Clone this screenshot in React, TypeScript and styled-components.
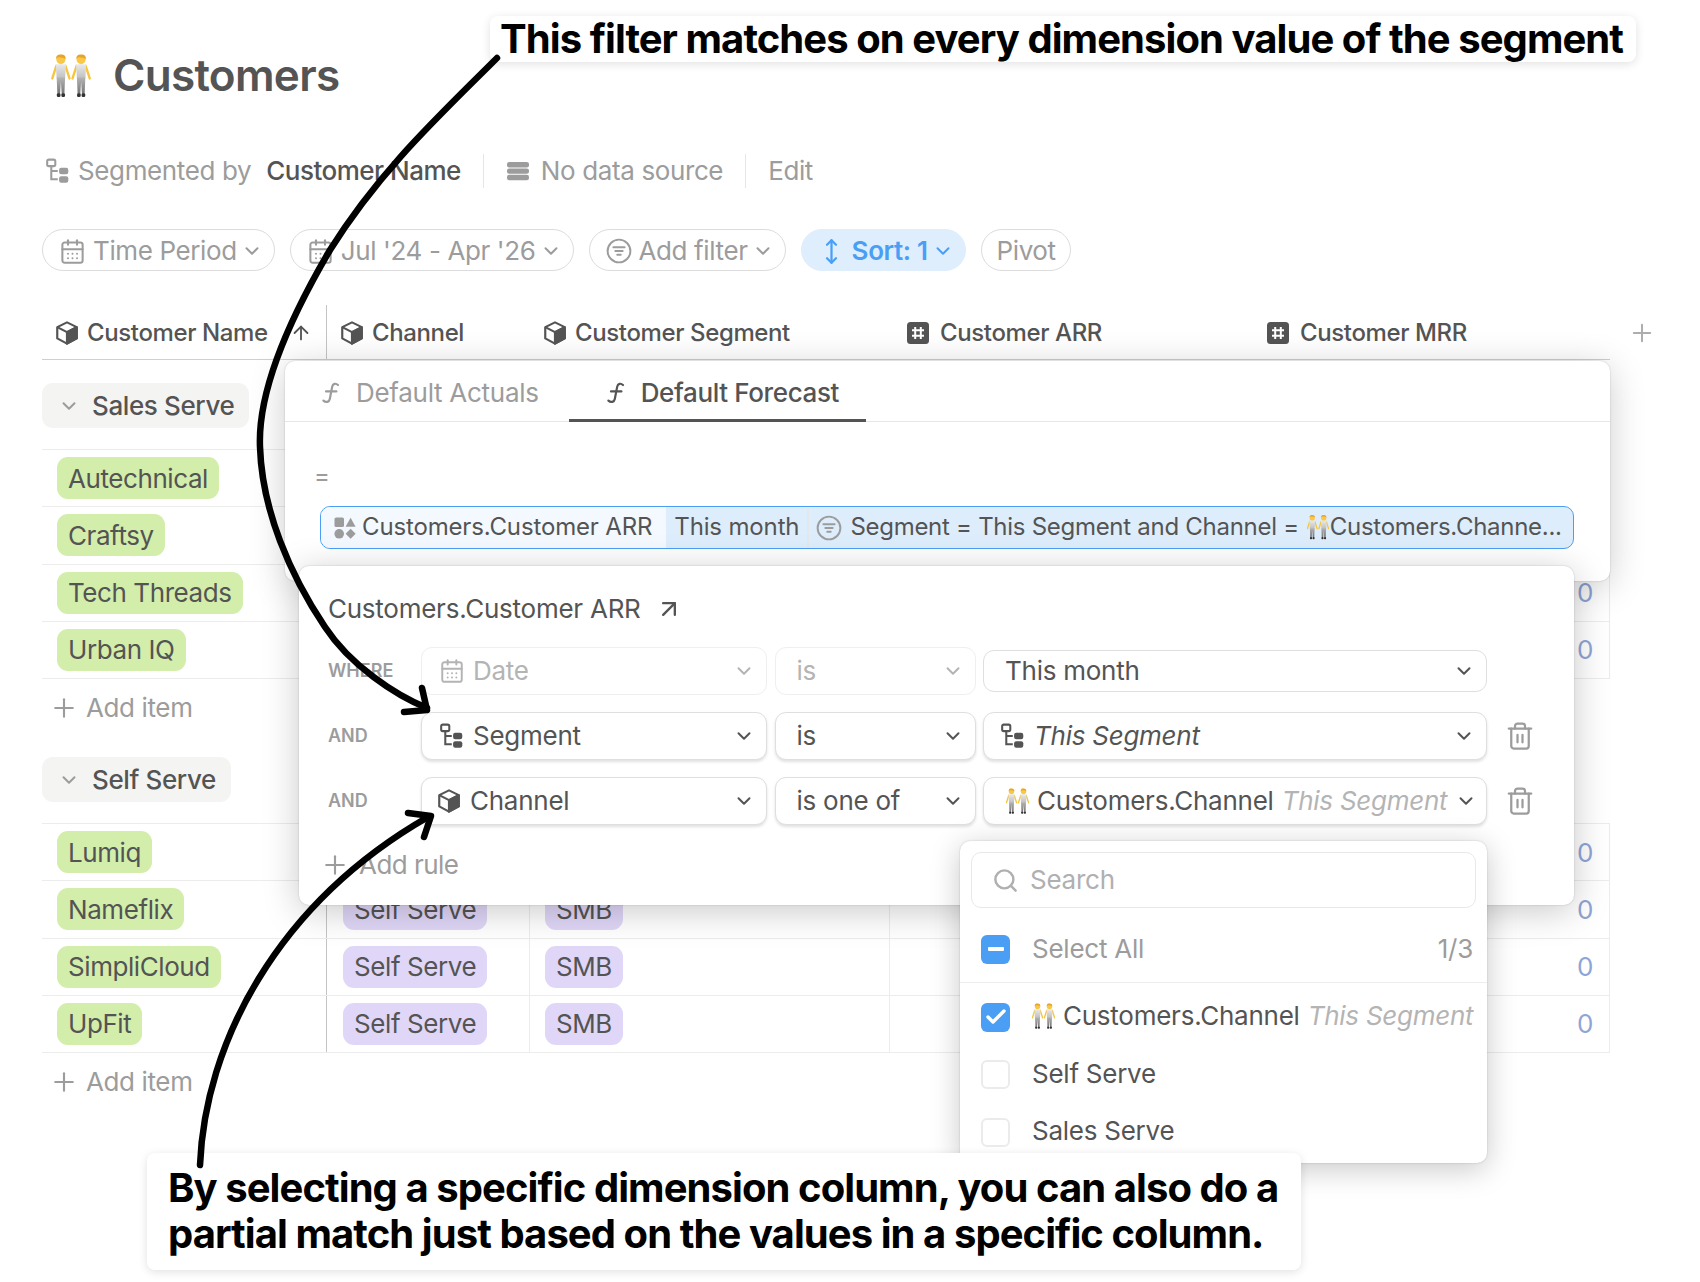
import React from "react";
import styled, { createGlobalStyle } from "styled-components";
import { ArrowUp, ArrowUpRight, CalendarDays, ChevronDown, MoveVertical, Plus, Search, Trash2, Check } from "lucide-react";

const Global = createGlobalStyle`
  html, body { margin: 0; padding: 0; background: #fff; }
  body { font-family: Inter, "Noto Sans", sans-serif; color: #545454; font-size: 26px; line-height: 1.2; letter-spacing: -0.38px; }
  * { box-sizing: border-box; }
`;

const TEXT = "#545454";
const MUTED = "#9c9c9c";
const BLUE = "#4a9ff5";

/* ---------- drawn icons ---------- */
const Svg = styled.svg<{ $size?: number }>`
  width: ${(p) => p.$size ?? 24}px;
  height: ${(p) => p.$size ?? 24}px;
  flex: none;
  display: block;
`;

const CubeIcon = ({ size = 26 }: { size?: number }) => (
  <Svg $size={size} viewBox="0 0 24 24" fill="none" stroke="currentColor" strokeWidth="2" strokeLinejoin="round">
    <path d="M12 2.2 21 6.6V17L12 21.8 3 17V6.6Z" />
    <path d="M3 6.6 12 11.2 21 6.6" />
    <path d="M12 11.2 21 6.6V17L12 21.8Z" fill="currentColor" />
  </Svg>
);
const HashIcon = () => (
  <Svg $size={22} viewBox="0 0 22 22">
    <rect width="22" height="22" rx="3.5" fill={TEXT} />
    <path d="M8.2 5v12M13.8 5v12M5 8.2h12M5 13.8h12" stroke="#fff" strokeWidth="2" fill="none" />
  </Svg>
);
const SegmentIcon = ({ size = 26 }: { size?: number }) => (
  <Svg $size={size} viewBox="0 0 24 24" fill="none" stroke="currentColor" strokeWidth="1.9">
    <rect x="2" y="1.5" width="7.5" height="6" rx="1.5" />
    <path d="M5.8 7.5v12.2h6M5.8 12h6" />
    <rect x="13" y="9" width="8.5" height="6" rx="2" fill="currentColor" stroke="none" />
    <rect x="13" y="16.8" width="8.5" height="6" rx="2" fill="currentColor" stroke="none" />
  </Svg>
);
const FilterCircleIcon = ({ size = 26 }: { size?: number }) => (
  <Svg $size={size} viewBox="0 0 24 24" fill="none" stroke="currentColor" strokeWidth="1.8" strokeLinecap="round">
    <circle cx="12" cy="12" r="10.5" />
    <path d="M6.8 8.6h10.4M8.6 12h6.8M10.4 15.4h3.2" />
  </Svg>
);
const ServerIcon = () => (
  <Svg $size={24} viewBox="0 0 24 24" fill="currentColor">
    <rect x="1" y="3" width="22" height="5.4" rx="2.2" />
    <rect x="1" y="9.4" width="22" height="5.4" rx="2.2" />
    <rect x="1" y="15.8" width="22" height="5.4" rx="2.2" />
  </Svg>
);
const FnIcon = () => (
  <Svg $size={22} viewBox="0 0 22 22" fill="none" stroke="currentColor" strokeWidth="2.2" strokeLinecap="round">
    <path d="M18 3C15.6 .8 12.8 1.6 12.2 4.6L9.8 17C9.2 20 6 21 3.4 18.6" />
    <path d="M6 9.4H16.4" />
  </Svg>
);
const ShapesIcon = () => (
  <Svg $size={22} viewBox="0 0 22 22" fill="currentColor">
    <rect x="0.5" y="0.5" width="9.5" height="9.5" rx="1.6" />
    <path d="M16.6 .8 21.6 9.8H11.6Z" />
    <circle cx="5.2" cy="16.8" r="4.8" />
    <path d="M16.6 11.8 21.6 16.8 16.6 21.8 11.6 16.8Z" />
  </Svg>
);

const EmojiSvg = styled.svg<{ $w: number; $h: number }>`
  width: ${(p) => p.$w}px;
  height: ${(p) => p.$h}px;
  flex: none;
  display: block;
`;
const Person = ({ x }: { x: number }) => (
  <g transform={`translate(${x} 0)`}>
    <path d="M6.6 14 1.8 29" stroke="#f7c63e" strokeWidth="2.8" strokeLinecap="round" fill="none" />
    <path d="M17.4 14 22.2 29" stroke="#f7c63e" strokeWidth="2.8" strokeLinecap="round" fill="none" />
    <path d="M6 12.5Q12 11 18 12.5L17 29H7Z" fill="url(#shirt)" />
    <path d="M7 28H17L16.2 47H13L12 33 11 47H7.8Z" fill="url(#legs)" />
    <rect x="7.2" y="46.5" width="4.3" height="4.5" rx="1.6" fill="#333" />
    <rect x="12.6" y="46.5" width="4.3" height="4.5" rx="1.6" fill="#333" />
    <circle cx="12" cy="6.6" r="5.4" fill="#f9c846" />
    <path d="M6.4 6.2C6 1 9.5 .4 12 .6 15.4.4 18 2 17.6 6.2 16 4.2 12 4 9.4 3.8 8 4 7 5 6.4 6.2Z" fill="#e5a52a" />
  </g>
);
const PeopleEmoji = ({ w = 23, h = 26 }: { w?: number; h?: number }) => (
  <EmojiSvg $w={w} $h={h} viewBox="0 0 46 51">
    <defs>
      <linearGradient id="shirt" x1="0" y1="0" x2="0" y2="1">
        <stop offset="0" stopColor="#eaeaea" />
        <stop offset="1" stopColor="#bfbfbf" />
      </linearGradient>
      <linearGradient id="legs" x1="0" y1="0" x2="0" y2="1">
        <stop offset="0" stopColor="#b4b4b4" />
        <stop offset="1" stopColor="#767676" />
      </linearGradient>
    </defs>
    <Person x={-1} />
    <Person x={23} />
  </EmojiSvg>
);

/* ---------- page ---------- */
const Page = styled.div`
  position: relative;
  width: 1700px;
  height: 1282px;
  overflow: hidden;
  padding: 52px 0 0 42px;
`;
const TitleRow = styled.div`
  display: flex;
  align-items: center;
  height: 46px;
  margin-left: 9px;
  gap: 22px;
`;
const Title = styled.h1`
  margin: 0;
  font-size: 44px;
  font-weight: 600;
  letter-spacing: -0.7px;
  color: ${TEXT};
`;
const MetaRow = styled.div`
  display: flex;
  align-items: center;
  height: 34px;
  margin-top: 56px;
  color: ${MUTED};
`;
const MetaGroup = styled.div`
  display: flex;
  align-items: center;
  gap: 7px;
  padding: 0 22px;
  height: 34px;
  &:first-child { padding-left: 3px; }
  & + & { border-left: 1px solid #e6e6e6; }
`;
const MetaStrong = styled.span`
  color: ${TEXT};
  font-weight: 500;
  margin-left: 8px;
  letter-spacing: -0.5px;
`;
const MetaServer = styled.span`
  display: flex;
  margin-right: 4px;
`;
const FilterRow = styled.div`
  display: flex;
  gap: 15px;
  margin-top: 41px;
`;
const Pill = styled.button<{ $active?: boolean }>`
  display: flex;
  align-items: center;
  gap: 6px;
  height: 42px;
  padding: 2px 11px 0 16px;
  border-radius: 21px;
  font: inherit;
  letter-spacing: inherit;
  font-weight: ${(p) => (p.$active ? 600 : 400)};
  color: ${(p) => (p.$active ? BLUE : MUTED)};
  background: ${(p) => (p.$active ? "#deeefd" : "#fff")};
  border: 1px solid ${(p) => (p.$active ? "#deeefd" : "#dcdcdc")};
  svg:first-child { margin-right: 1px; }
  svg:last-child { margin-left: -2px; }
`;
const PivotPill = styled(Pill)`
  padding: 2px 14px 0 15px;
`;

/* ---------- table ---------- */
const COLS = "285px 203px 360px 360px 360px";
const HeaderWrap = styled.div`
  display: flex;
  align-items: center;
  margin-top: 34px;
  font-size: 24px;
`;
const HeaderGrid = styled.div`
  display: grid;
  grid-template-columns: ${COLS};
  width: 1568px;
  height: 55px;
  border-bottom: 1px solid #cfcfcf;
`;
const HeaderCell = styled.div<{ $first?: boolean; $pad?: number; $gap?: number }>`
  display: flex;
  align-items: center;
  gap: ${(p) => p.$gap ?? 7}px;
  padding: 2px 14px 0 ${(p) => p.$pad ?? 12}px;
  font-weight: 500;
  border-right: ${(p) => (p.$first ? "1px solid #c4c4c4" : "0")};
`;
const SortMark = styled.span`
  margin-left: auto;
  display: flex;
`;
const AddColumn = styled.span`
  margin-left: 18px;
  color: #adadad;
  display: flex;
`;
const GroupChip = styled.div`
  display: inline-flex;
  align-items: center;
  gap: 12px;
  height: 45px;
  margin: 23px 0 21px;
  padding: 0 15px 0 16px;
  background: #f4f4f3;
  border-radius: 11px;
  color: ${TEXT};
  font-weight: 500;
  svg { color: ${MUTED}; }
`;
const Row = styled.div`
  display: grid;
  grid-template-columns: ${COLS};
  width: 1568px;
  height: 57.25px;
  border-top: 1px solid #ececec;
`;
const Cell = styled.div<{ $first?: boolean; $edge?: boolean; $pad?: number }>`
  display: flex;
  align-items: center;
  justify-content: ${(p) => (p.$edge ? "flex-end" : "flex-start")};
  padding: 0 ${(p) => (p.$edge ? 16 : 0)}px 0 ${(p) => p.$pad ?? 15}px;
  border-right: 1px solid ${(p) => (p.$first ? "#c4c4c4" : "#ececec")};
`;
const Tag = styled.span<{ $kind: "green" | "purple" }>`
  display: inline-flex;
  align-items: center;
  height: 42px;
  padding: 0 11px;
  border-radius: 11px;
  letter-spacing: -0.42px;
  background: ${(p) => (p.$kind === "green" ? "#d3edab" : "#e0d7f8")};
  color: ${TEXT};
  white-space: nowrap;
`;
const Zero = styled.span`
  color: #8fa5d6;
`;
const AddItem = styled.div`
  display: flex;
  align-items: center;
  gap: 7px;
  height: 56px;
  width: 1568px;
  padding: 2px 0 0 7px;
  border-top: 1px solid #ececec;
  color: ${MUTED};
`;

/* ---------- overlays ---------- */
const FormulaPopover = styled.div`
  position: absolute;
  left: 285px;
  top: 361px;
  width: 1325px;
  height: 220px;
  background: #fff;
  border-radius: 10px;
  box-shadow: 0 6px 36px rgba(0, 0, 0, 0.2), 0 0 2px rgba(0, 0, 0, 0.2);
`;
const TabBar = styled.div`
  display: flex;
  gap: 30px;
  height: 61px;
  padding-left: 35px;
  border-bottom: 1px solid #e6e6e6;
`;
const Tab = styled.div<{ $active?: boolean }>`
  display: flex;
  align-items: center;
  gap: 14px;
  padding: ${(p) => (p.$active ? "6px 27px 0 36px" : "6px 0 0")};
  margin-bottom: -1px;
  letter-spacing: ${(p) => (p.$active ? "-0.38px" : "-0.28px")};
  font-weight: ${(p) => (p.$active ? 500 : 400)};
  color: ${(p) => (p.$active ? TEXT : MUTED)};
  border-bottom: 3px solid ${(p) => (p.$active ? TEXT : "transparent")};
`;
const Equals = styled.div`
  margin: 42px 0 0 29px;
  height: 24px;
  line-height: 24px;
  font-size: 24px;
  color: ${MUTED};
`;
const FormulaBar = styled.div`
  display: flex;
  margin: 18px 36px 0 35px;
  height: 43px;
  font-size: 24px;
  letter-spacing: -0.15px;
  border: 1px solid ${BLUE};
  border-radius: 10px;
  overflow: hidden;
  background: #deedfb;
`;
const FormulaPart = styled.div<{ $light?: boolean; $sep?: boolean; $pad?: string }>`
  display: flex;
  align-items: center;
  gap: 6px;
  padding: ${(p) => p.$pad ?? "0 8px"};
  background: ${(p) => (p.$light ? "#f3f9fe" : "transparent")};
  border-right: ${(p) => (p.$sep ? "2px solid #e4e8ec" : "0")};
  white-space: nowrap;
  svg { color: ${MUTED}; }
`;
const FilterText = styled.span`
  margin-left: 2px;
  display: inline-flex;
  align-items: center;
  letter-spacing: -0.28px;
`;
const FormulaEmoji = styled.span`
  display: flex;
  margin: 0 1px 0 8px;
`;
const RulesPopover = styled.div`
  position: absolute;
  left: 299px;
  top: 566px;
  width: 1275px;
  height: 339px;
  background: #fff;
  border-radius: 10px;
  padding: 27px 0 0 29px;
  letter-spacing: -0.25px;
  box-shadow: 0 6px 36px rgba(0, 0, 0, 0.22), 0 0 2px rgba(0, 0, 0, 0.2);
`;
const RuleTitle = styled.div`
  display: flex;
  align-items: center;
  gap: 14px;
  height: 32px;
  font-weight: 400;
`;
const Rules = styled.div`
  display: grid;
  grid-template-columns: 85.5px 346px 201px 504px 44px;
  grid-auto-rows: 48px;
  column-gap: 7.5px;
  row-gap: 17px;
  align-items: center;
  margin-top: 22px;
`;
const RuleLabel = styled.span`
  font-size: 18px;
  font-weight: 600;
  letter-spacing: 0;
  color: ${MUTED};
`;
const Select = styled.div<{ $kind?: "disabled" | "plain" | "raised"; $pad?: number }>`
  display: flex;
  align-items: center;
  gap: 8px;
  height: ${(p) => (p.$kind === "plain" ? 42 : 48)}px;
  padding: 0 11px 0 ${(p) => p.$pad ?? 21}px;
  border-radius: 11px;
  background: #fff;
  white-space: nowrap;
  color: ${(p) => (p.$kind === "disabled" ? "#b4b4b4" : TEXT)};
  border: 1px solid ${(p) => (p.$kind === "disabled" ? "#efefef" : "#dfdfdf")};
  box-shadow: ${(p) => (p.$kind === "raised" ? "0 2px 3px rgba(0,0,0,.12)" : "none")};
`;
const Chevron = styled.span`
  margin-left: auto;
  display: flex;
  flex: none;
`;
const Italic = styled.em<{ $muted?: boolean }>`
  font-style: italic;
  color: ${(p) => (p.$muted ? "#b4b4b4" : TEXT)};
`;
const TrashBtn = styled.span`
  display: flex;
  color: ${MUTED};
  margin-left: 10px;
  svg { flex: none; }
`;
const AddRule = styled.div`
  display: flex;
  align-items: center;
  gap: 9px;
  height: 32px;
  margin: 24px 0 0 -8px;
  letter-spacing: -0.55px;
  color: ${MUTED};
`;
const Dropdown = styled.div`
  position: absolute;
  left: 960px;
  top: 841px;
  width: 527px;
  height: 322px;
  background: #fff;
  border-radius: 10px;
  padding: 11px 11px 0;
  overflow: hidden;
  letter-spacing: -0.25px;
  box-shadow: 0 6px 30px rgba(0, 0, 0, 0.22), 0 0 2px rgba(0, 0, 0, 0.2);
`;
const SearchBox = styled.div`
  display: flex;
  align-items: center;
  gap: 11px;
  height: 56px;
  padding-left: 20px;
  border: 1px solid #e8e8e8;
  border-radius: 10px;
  color: #b0b0b0;
`;
const DropRow = styled.div<{ $line?: boolean }>`
  display: flex;
  align-items: center;
  height: 57.5px;
  margin: 0 -11px;
  padding: 0 14px 0 21px;
  white-space: nowrap;
  border-bottom: ${(p) => (p.$line ? "1px solid #ededed" : "0")};
`;
const SelectAllRow = styled(DropRow)`
  height: 75px;
  padding-top: 8px;
  color: ${MUTED};
  margin-bottom: 4px;
`;
const Count = styled.span`
  margin-left: auto;
`;
const Checkbox = styled.span<{ $state?: "on" | "mixed" }>`
  display: flex;
  align-items: center;
  justify-content: center;
  width: 29px;
  height: 29px;
  flex: none;
  margin: ${(p) => (p.$state === "mixed" ? "0" : "3px")} 22px 0 0;
  border-radius: 6px;
  color: #fff;
  background: ${(p) => (p.$state ? BLUE : "#fff")};
  border: ${(p) => (p.$state ? "0" : "2px solid #ebebeb")};
`;
const MixedBar = styled.span`
  width: 16px;
  height: 4px;
  border-radius: 1px;
  background: #fff;
`;
const EmojiText = styled.span<{ $after?: number }>`
  display: inline-flex;
  align-items: center;
  gap: 8px;
  margin-right: ${(p) => p.$after ?? 0}px;
`;
const Callout = styled.div<{ $left: number; $top: number; $w: number; $h: number; $pad: number }>`
  position: absolute;
  left: ${(p) => p.$left}px;
  top: ${(p) => p.$top}px;
  width: ${(p) => p.$w}px;
  height: ${(p) => p.$h}px;
  padding: 0 0 1px ${(p) => p.$pad}px;
  background: #fff;
  border-radius: 8px;
  color: #000;
  font-size: 40px;
  font-weight: 700;
  line-height: 46px;
  letter-spacing: -0.93px;
  white-space: nowrap;
  display: flex;
  align-items: center;
  box-shadow: 0 2px 10px rgba(0, 0, 0, 0.12);
`;
const ArrowLayer = styled.svg`
  position: absolute;
  left: 0;
  top: 0;
  width: 1700px;
  height: 1282px;
  pointer-events: none;
`;

const Down = ({ size = 22 }: { size?: number }) => <ChevronDown size={size} strokeWidth={2.2} />;

const groups = [
  { name: "Sales Serve", kind: "Sales Serve", seg: "Mid-Market", items: ["Autechnical", "Craftsy", "Tech Threads", "Urban IQ"] },
  { name: "Self Serve", kind: "Self Serve", seg: "SMB", items: ["Lumiq", "Nameflix", "SimpliCloud", "UpFit"] },
];

export default function App() {
  return (
    <>
      <Global />
      <Page>
        <TitleRow>
          <PeopleEmoji w={40} h={43} />
          <Title>Customers</Title>
        </TitleRow>
        <MetaRow>
          <MetaGroup>
            <SegmentIcon />
            <span>Segmented by</span>
            <MetaStrong>Customer Name</MetaStrong>
          </MetaGroup>
          <MetaGroup>
            <MetaServer><ServerIcon /></MetaServer>
            <span>No data source</span>
          </MetaGroup>
          <MetaGroup>
            <span>Edit</span>
          </MetaGroup>
        </MetaRow>
        <FilterRow>
          <Pill><CalendarDays size={27} strokeWidth={1.8} />Time Period<Down /></Pill>
          <Pill><CalendarDays size={27} strokeWidth={1.8} />Jul '24 - Apr '26<Down /></Pill>
          <Pill><FilterCircleIcon />Add filter<Down /></Pill>
          <Pill $active><MoveVertical size={27} strokeWidth={2} />Sort: 1<Down /></Pill>
          <PivotPill>Pivot</PivotPill>
        </FilterRow>
        <HeaderWrap>
          <HeaderGrid>
            <HeaderCell $first><CubeIcon />Customer Name<SortMark><ArrowUp size={22} strokeWidth={2} /></SortMark></HeaderCell>
            <HeaderCell><CubeIcon />Channel</HeaderCell>
            <HeaderCell><CubeIcon />Customer Segment</HeaderCell>
            <HeaderCell $pad={17} $gap={11}><HashIcon />Customer ARR</HeaderCell>
            <HeaderCell $pad={17} $gap={11}><HashIcon />Customer MRR</HeaderCell>
          </HeaderGrid>
          <AddColumn><Plus size={28} strokeWidth={1.7} /></AddColumn>
        </HeaderWrap>

        {groups.map((g) => (
          <div key={g.name}>
            <GroupChip><Down />{g.name}</GroupChip>
            {g.items.map((item) => (
              <Row key={item}>
                <Cell $first><Tag $kind="green">{item}</Tag></Cell>
                <Cell $pad={16}><Tag $kind="purple">{g.kind}</Tag></Cell>
                <Cell $pad={15}><Tag $kind="purple">{g.seg}</Tag></Cell>
                <Cell $edge><Zero>0</Zero></Cell>
                <Cell $edge><Zero>0</Zero></Cell>
              </Row>
            ))}
            <AddItem><Plus size={30} strokeWidth={1.7} />Add item</AddItem>
          </div>
        ))}

        <FormulaPopover>
          <TabBar>
            <Tab><FnIcon />Default Actuals</Tab>
            <Tab $active><FnIcon />Default Forecast</Tab>
          </TabBar>
          <Equals>=</Equals>
          <FormulaBar>
            <FormulaPart $light $pad="0 14px 0 13px"><ShapesIcon />Customers.Customer ARR</FormulaPart>
            <FormulaPart $sep>This month</FormulaPart>
            <FormulaPart $pad="0 8px 0 7px">
              <FilterCircleIcon size={26} />
              <FilterText>Segment = This Segment and Channel =<FormulaEmoji><PeopleEmoji w={22} /></FormulaEmoji>Customers.Channe...</FilterText>
            </FormulaPart>
          </FormulaBar>
        </FormulaPopover>

        <RulesPopover>
          <RuleTitle>Customers.Customer ARR<ArrowUpRight size={28} strokeWidth={2} /></RuleTitle>
          <Rules>
            <RuleLabel>WHERE</RuleLabel>
            <Select $kind="disabled" $pad={17}><CalendarDays size={26} strokeWidth={1.8} />Date<Chevron><Down /></Chevron></Select>
            <Select $kind="disabled">is<Chevron><Down /></Chevron></Select>
            <Select $kind="plain">This month<Chevron><Down /></Chevron></Select>
            <span />
            <RuleLabel>AND</RuleLabel>
            <Select $kind="raised" $pad={17}><SegmentIcon />Segment<Chevron><Down /></Chevron></Select>
            <Select $kind="raised">is<Chevron><Down /></Chevron></Select>
            <Select $kind="raised" $pad={16}><SegmentIcon /><Italic>This Segment</Italic><Chevron><Down /></Chevron></Select>
            <TrashBtn><Trash2 size={30} strokeWidth={1.8} /></TrashBtn>
            <RuleLabel>AND</RuleLabel>
            <Select $kind="raised" $pad={14}><CubeIcon />Channel<Chevron><Down /></Chevron></Select>
            <Select $kind="raised">is one of<Chevron><Down /></Chevron></Select>
            <Select $kind="raised" $pad={22}><EmojiText><PeopleEmoji />Customers.Channel</EmojiText><Italic $muted>This Segment</Italic><Chevron><Down /></Chevron></Select>
            <TrashBtn><Trash2 size={30} strokeWidth={1.8} /></TrashBtn>
          </Rules>
          <AddRule><Plus size={30} strokeWidth={1.7} />Add rule</AddRule>
        </RulesPopover>

        <Dropdown>
          <SearchBox><Search size={27} strokeWidth={2.2} />Search</SearchBox>
          <SelectAllRow $line>
            <Checkbox $state="mixed"><MixedBar /></Checkbox>
            <span>Select All</span>
            <Count>1/3</Count>
          </SelectAllRow>
          <DropRow>
            <Checkbox $state="on"><Check size={24} strokeWidth={3.4} /></Checkbox>
            <EmojiText $after={8}><PeopleEmoji />Customers.Channel</EmojiText>
            <Italic $muted>This Segment</Italic>
          </DropRow>
          <DropRow><Checkbox /><span>Self Serve</span></DropRow>
          <DropRow><Checkbox /><span>Sales Serve</span></DropRow>
        </Dropdown>

        <Callout $left={490} $top={16} $w={1146} $h={46} $pad={10}>
          This filter matches on every dimension value of the segment
        </Callout>
        <Callout $left={147} $top={1153} $w={1154} $h={117} $pad={21}>
          <span>
            By selecting a specific dimension column, you can also do a
            <br />
            partial match just based on the values in a specific column.
          </span>
        </Callout>

        <ArrowLayer viewBox="0 0 1700 1282" fill="none" stroke="#000" strokeWidth="6.5" strokeLinecap="round" strokeLinejoin="round">
          <path d="M497 58C440 115 380 170 330 250 280 335 258 400 260 447 262 510 290 575 325 627 350 665 395 695 427 708" />
          <path d="M422 688 427 710 404 712" />
          <path d="M200 1165C205 1045 275 905 428 817" />
          <path d="M408 813 431 816 424 837" />
        </ArrowLayer>
      </Page>
    </>
  );
}
